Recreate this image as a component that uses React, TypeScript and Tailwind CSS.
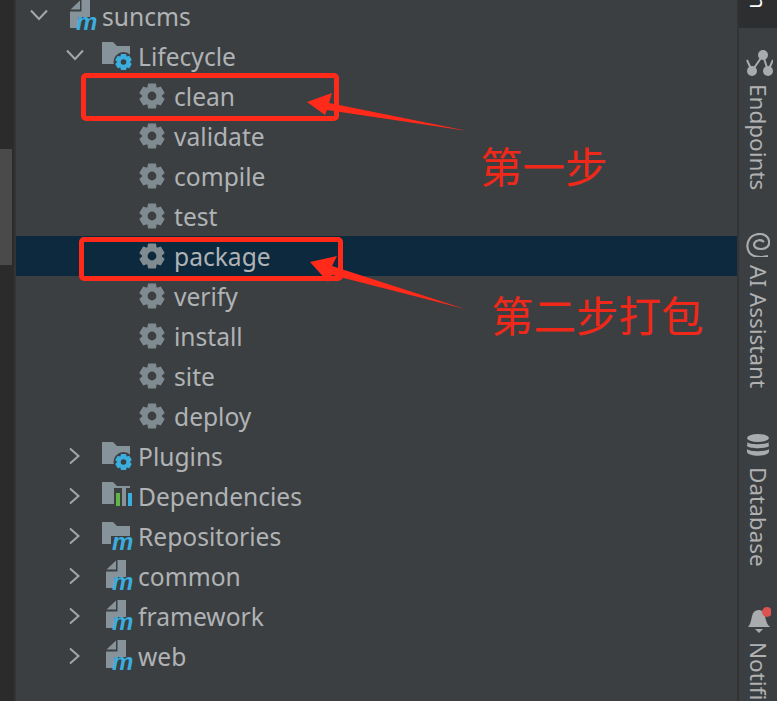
const gearPath = (cx: number, cy: number, outer: number, inner: number, hole: number) => {
  // gear with 6 teeth and a round hole
  const pts: string[] = [];
  for (let i = 0; i < 6; i++) {
    const a = (i * Math.PI) / 3 - Math.PI / 2;
    const step = 0.3;
    const valley = 0.52;
    [
      [inner, a - valley],
      [outer, a - step],
      [outer, a + step],
      [inner, a + valley],
    ].forEach(([r, t]) => {
      pts.push(`${(cx + r * Math.cos(t)).toFixed(2)} ${(cy + r * Math.sin(t)).toFixed(2)}`);
    });
  }
  return `M${pts.join("L")}Z M${cx + hole} ${cy}A${hole} ${hole} 0 1 0 ${cx - hole} ${cy}A${hole} ${hole} 0 1 0 ${cx + hole} ${cy}Z`;
};

function Chevron({ open }: { open: boolean }) {
  return (
    <svg width="18" height="18" viewBox="0 0 18 18" fill="none" stroke="#a4a6a8" strokeWidth="2" className={open ? "-mt-[3px]" : ""}>
      {open ? <path d="M1 4.500l8 8.500 8-8.500" /> : <path d="M4 1.500l8.500 7.500-8.500 7.500" />}
    </svg>
  );
}

function BlueM({ x }: { x: number }) {
  return (
    <text x={x} y="33.500" fontFamily="Liberation Sans, sans-serif" fontSize="24" fontWeight="700" fontStyle="italic" fill="#3aaede">
      m
    </text>
  );
}

function ModuleIcon() {
  return (
    <svg width="32" height="40" viewBox="0 0 32 40" className="ml-1 overflow-visible">
      <path d="M.5 13.500L10 4.500v9zM0 15.500h11.500V4h8.500v17H8.500v11H0z" fill="#87939a" />
      <BlueM x={6} />
    </svg>
  );
}

function FolderIcon({ badge }: { badge: "gear" | "bars" | "m" }) {
  return (
    <svg width="32" height="40" viewBox="0 0 32 40" className="overflow-visible">
      <path d="M0 28V6h11l4 4h13v18z" fill="#87939a" />
      {badge === "gear" && (
        <g>
          <circle cx="21.500" cy="26" r="10" fill="#3c3f41" />
          <path d={gearPath(21.5, 26, 8.5, 6.4, 2.8)} fill="#3aaede" fillRule="evenodd" />
        </g>
      )}
      {badge === "bars" && (
        <g>
          <rect x="12" y="12" width="20" height="19" fill="#3c3f41" />
          <rect x="14" y="17" width="4" height="13" fill="#62b543" />
          <rect x="20" y="11" width="4" height="19" fill="#87939a" />
          <rect x="26" y="17" width="4" height="13" fill="#3aaede" />
        </g>
      )}
      {badge === "m" && (
        <g>
          <rect x="9" y="20" width="23" height="15" fill="#3c3f41" />
          <BlueM x={10} />
        </g>
      )}
    </svg>
  );
}

function GoalIcon() {
  return (
    <svg width="26" height="26" viewBox="0 0 26 26" className="ml-px">
      <path d={gearPath(13, 13, 13, 9.6, 4.4)} fill="#7f8b91" fillRule="evenodd" />
    </svg>
  );
}

function Row({ label, indent, open, icon, selected }: { label: string; indent: string; open?: boolean; icon: React.ReactNode; selected?: boolean }) {
  return (
    <div className={`flex items-center h-10 ${indent} ${selected ? "bg-[#0d293e]" : ""}`}>
      {open !== undefined && (
        <span className="w-9 shrink-0 flex">
          <Chevron open={open} />
        </span>
      )}
      <span className="w-9 shrink-0 flex">{icon}</span>
      <span className="text-[24.6px] leading-10 pt-[2px] text-[#b0b3b5]">{label}</span>
    </div>
  );
}

const goals = ["clean", "validate", "compile", "test", "package", "verify", "install", "site", "deploy"];

function SideLabel({ text, icon, className }: { text: string; icon: React.ReactNode; className: string }) {
  return (
    <div className={`flex flex-col items-center gap-2 ${className}`}>
      {icon}
      <span className="[writing-mode:vertical-rl] text-[22.5px] leading-[26px] text-[#afb1b3] whitespace-nowrap">{text}</span>
    </div>
  );
}

export default function App() {
  return (
    <div className="relative w-[777px] h-[701px] overflow-hidden flex bg-[#3c3f41] font-['Noto_Sans','Liberation_Sans',sans-serif]">
      {/* scrollbar strip */}
      <div className="w-4 shrink-0 bg-[#2b2b2b] border-r-2 border-[#333435] pt-[149px]">
        <div className="w-3 h-[116px] bg-[#4a4a4a]" />
      </div>

      {/* maven tree */}
      <div className="flex-1 -mt-1">
        <Row label="suncms" indent="pl-[14px]" open={true} icon={<ModuleIcon />} />
        <Row label="Lifecycle" indent="pl-[50px]" open={true} icon={<FolderIcon badge="gear" />} />
        {goals.map((g) => (
          <Row key={g} label={g} indent="pl-[122px]" icon={<GoalIcon />} selected={g === "package"} />
        ))}
        <Row label="Plugins" indent="pl-[50px]" open={false} icon={<FolderIcon badge="gear" />} />
        <Row label="Dependencies" indent="pl-[50px]" open={false} icon={<FolderIcon badge="bars" />} />
        <Row label="Repositories" indent="pl-[50px]" open={false} icon={<FolderIcon badge="m" />} />
        <Row label="common" indent="pl-[50px]" open={false} icon={<ModuleIcon />} />
        <Row label="framework" indent="pl-[50px]" open={false} icon={<ModuleIcon />} />
        <Row label="web" indent="pl-[50px]" open={false} icon={<ModuleIcon />} />
      </div>

      {/* tool window bar */}
      <div className="w-10 shrink-0 border-l-2 border-[#323334] flex flex-col overflow-hidden">
        <div className="h-7 shrink-0 bg-[#2d2e30] overflow-hidden flex justify-center items-start">
          <span className="[writing-mode:vertical-rl] text-[22.5px] leading-[26px] text-white -mt-[5px]">n</span>
        </div>
        <SideLabel
          text="Endpoints"
          className="mt-5"
          icon={
            <svg width="28" height="28" viewBox="0 0 28 28" fill="#a9abad" stroke="#a9abad" strokeWidth="2" className="translate-x-px">
              <circle cx="18" cy="7" r="5" stroke="none" />
              <circle cx="7" cy="23" r="5" stroke="none" />
              <circle cx="23" cy="23" r="5" stroke="none" />
              <path d="M18 7L7 23M18 7l5 16M2 12l5 11M28 12l-5 11" fill="none" />
            </svg>
          }
        />
        <SideLabel
          text="AI Assistant"
          className="mt-[43px]"
          icon={
            <svg width="24" height="24" viewBox="0 0 24 24" fill="none" stroke="#a9abad" strokeWidth="2.200">
              <path d="M22 23C14 25 6 24 3 19C-1 12 3 3 10 1.500C16 0 22 2 23 8C24 13 20 16 15 16C10 16 7 13.500 8.500 10C10 7 15 6 18 9" />
            </svg>
          }
        />
        <SideLabel
          text="Database"
          className="mt-[45px]"
          icon={
            <svg width="24" height="26" viewBox="0 0 24 26" fill="#a9abad">
              <ellipse cx="12" cy="5" rx="11" ry="4" />
              <path d="M1 9c2 3 20 3 22 0-1 3 0 2 0 4-2 3-20 3-22 0 0-2 1-1 0-4zM1 16c2 3 20 3 22 0v3c-2 5-20 5-22 0z" />
            </svg>
          }
        />
        <SideLabel
          text="Notifications"
          className="mt-[39px]"
          icon={
            <svg width="26" height="28" viewBox="0 0 26 28">
              <path d="M3 21C7 17 6 9 9 6C11 4 15 3 18 6C21 9 20 17 25 21z" fill="#a9abad" />
              <path d="M10 23h8l-4 4z" fill="#a9abad" />
              <circle cx="22" cy="6" r="5" fill="#d9534f" />
            </svg>
          }
        />
      </div>

      {/* red annotations over the screenshot */}
      <div className="absolute left-[81px] top-[73px] w-[258px] h-[48px] border-[5px] border-[#ff2a1a] rounded-[5px]" />
      <div className="absolute left-[79px] top-[237px] w-[264px] h-[44px] border-[5px] border-[#ff2a1a] rounded-[5px]" />
      <svg className="absolute left-0 top-0" width="777" height="701" fill="#ff2a1a">
        <polygon points="307,102 332,93 329,103 468,131 327,110 325,115" />
        <polygon points="310,262 337,256 332,266 465,309 332,275 328,282" />
      </svg>
      <div className="absolute left-[480px] top-[135px] text-[42.5px] leading-[60px] text-[#f0281a] font-['Noto_Sans_CJK_SC',sans-serif] whitespace-nowrap">第一步</div>
      <div className="absolute left-[491px] top-[284px] text-[42.5px] leading-[60px] text-[#f0281a] font-['Noto_Sans_CJK_SC',sans-serif] whitespace-nowrap">第二步打包</div>
    </div>
  );
}
